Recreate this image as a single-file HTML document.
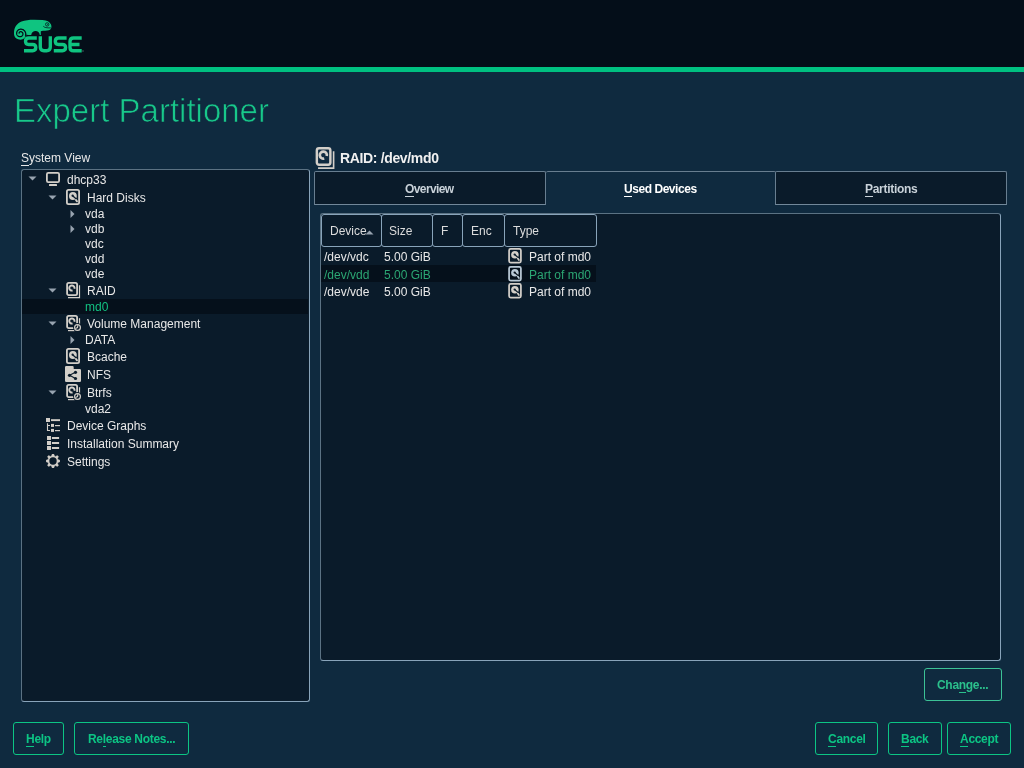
<!DOCTYPE html><html><head><meta charset="utf-8"><style>
html,body{margin:0;padding:0;width:1024px;height:768px;overflow:hidden;background:#0f2a3f;font-family:"Liberation Sans",sans-serif;}
.a{position:absolute;display:block}
.t{position:absolute;white-space:nowrap;will-change:transform}
u{text-decoration:none;border-bottom:1px solid currentColor;}
.btn{position:absolute;box-sizing:border-box;border:1px solid #0cc584;border-radius:3px;}
</style></head><body>
<div class="a" style="left:0;top:0;width:1024px;height:67px;background:#040e19"></div>
<div class="a" style="left:0;top:67px;width:1024px;height:5px;background:#00c081"></div>
<svg class="a" style="left:0;top:0" width="100" height="60" viewBox="0 0 100 60">
<path d="M14 33.5 C14 27 17 23.5 21.5 21.6 C25 20.2 29 19.7 34 19.7 L42.5 20 C47 20.2 49.8 21.8 51 24.5 C51.8 26.5 51.6 28.6 50 29.7 C48.5 30.6 46 30.7 43 30.8 L40.8 31.2 L40.8 34.9 L39.8 34.9 C39.5 32.6 37.8 31 35.6 31 C33.4 31 31.6 32.6 31.2 34.9 L27.8 34.9 L26.6 34.6 C25.9 36.6 24.6 38.5 22.6 39.3 C20.5 40 17.8 39.6 16 38.2 C14.6 37 14 35.3 14 33.5 Z" fill="#0fc480"/>
<path d="M25.48 35.97 L25.62 35.45 L25.72 34.94 L25.76 34.42 L25.75 33.90 L25.70 33.39 L25.60 32.90 L25.45 32.42 L25.26 31.96 L25.03 31.54 L24.76 31.13 L24.46 30.77 L24.12 30.43 L23.76 30.13 L23.38 29.88 L22.98 29.66 L22.57 29.48 L22.15 29.35 L21.72 29.26 L21.29 29.21 L20.86 29.21 L20.44 29.24 L20.03 29.30 L19.63 29.39 L19.25 29.52 L18.88 29.68 L18.53 29.88 L18.20 30.10 L17.90 30.36 L17.63 30.64 L17.39 30.94 L17.18 31.26 L17.01 31.59 L16.87 31.94 L16.76 32.30 L16.69 32.66 L16.65 33.02 L16.65 33.38 L16.69 33.74 L16.75 34.08 L16.85 34.42 L16.98 34.74 L17.14 35.04 L17.33 35.33 L17.53 35.59 L17.76 35.83 L18.01 36.04 L18.28 36.23 L18.56 36.39 L18.85 36.52 L19.15 36.62 L19.45 36.69 L19.76 36.72 L20.06 36.73 L20.36 36.71 L20.65 36.67 L20.94 36.59 L21.21 36.49 L21.47 36.37 L21.71 36.22 L21.93 36.05 L22.13 35.86 L22.32 35.66 L22.47 35.45 L22.61 35.22 L22.72 34.98 L22.81 34.74 L22.87 34.49 L22.91 34.24 L22.92 34.00 L22.91 33.75 L22.88 33.52 L22.82 33.29 L22.74 33.07 L22.64 32.86 L22.53 32.66 L22.40 32.48 L22.25 32.32 L22.09 32.17 L21.92 32.05 L21.75 31.94 L21.56 31.85 L21.37 31.78 L21.18 31.73 L20.99 31.70 L20.80 31.69 L20.61 31.70 L20.43 31.72 L20.25 31.77 L20.09 31.83 L19.93 31.90 L19.78 31.99 L19.65 32.09 L19.53 32.20 L19.42 32.32 L19.33 32.44 L19.25 32.57 L19.19 32.71 L19.14 32.85 L19.11 32.99 L19.10 33.13" fill="none" stroke="#040e19" stroke-width="1.25" stroke-linecap="round"/>
<circle cx="47.2" cy="24.4" r="1.7" fill="none" stroke="#040e19" stroke-width="0.75"/>
<circle cx="47.6" cy="24.2" r="0.5" fill="#040e19"/>
<path d="M43.3 26.3 C44.5 27.5 46.5 28 50.9 27.9" fill="none" stroke="#040e19" stroke-width="0.75"/>
<g fill="none" stroke="#0fc480" stroke-width="3.35">
<path d="M36.8 37.95 H28.7 Q25.5 37.95 25.5 41.2 V41.3 Q25.5 44.5 28.7 44.5 H32.6 Q35.8 44.5 35.8 47.6 V47.6 Q35.8 50.75 32.6 50.75 H24.0"/>
<path d="M40.3 36.3 V47 Q40.3 50.75 44 50.75 H46.6 Q50.3 50.75 50.3 47 V36.3"/>
<path d="M66.6 37.95 H58.5 Q55.3 37.95 55.3 41.2 V41.3 Q55.3 44.5 58.5 44.5 H62.400000000000006 Q65.6 44.5 65.6 47.6 V47.6 Q65.6 50.75 62.400000000000006 50.75 H53.8"/>
<path d="M81.7 37.95 H73.5 Q70 37.95 70 41.5 V47.2 Q70 50.75 73.5 50.75 H81.7 M70.5 44.5 H79.5"/>
</g>
<circle cx="83" cy="51" r="0.7" fill="#5a7a78"/>
</svg>
<div class="t" style="left:13.5px;top:90px;font-size:33px;line-height:41px;font-weight:normal;color:#18c88a;-webkit-text-stroke:0.7px #0f2a3f">Expert Partitioner</div>
<div class="t" style="left:21px;top:151px;font-size:12px;line-height:15px;font-weight:normal;color:#e8e8e8;"><u>S</u>ystem View</div>
<div class="a" style="left:21px;top:169px;width:287px;height:531px;background:#0a1b2a;border:1px solid #89a4ba;border-left-color:#5b7283;border-top-color:#5b7283;border-radius:3px"></div>
<div class="a" style="left:22px;top:299px;width:286px;height:15px;background:#05101b"></div>
<svg class="a" style="left:28px;top:176px" width="9" height="5" viewBox="0 0 9 5"><path d="M0.5 0.5 H8.5 L4.5 4.5 Z" fill="#98a4b0"/></svg>
<svg class="a" style="left:46px;top:172px" width="14" height="14" viewBox="0 0 14 14"><rect x="0.9" y="0.9" width="12.2" height="9.2" rx="1.4" fill="none" stroke="#d3cfc9" stroke-width="1.8"/><rect x="3" y="12" width="8" height="2" rx="0.6" fill="#d3cfc9"/></svg>
<div class="t" style="left:67px;top:173px;font-size:12px;line-height:15px;font-weight:normal;color:#e8e8e8;">dhcp33</div>
<svg class="a" style="left:48px;top:195px" width="9" height="5" viewBox="0 0 9 5"><path d="M0.5 0.5 H8.5 L4.5 4.5 Z" fill="#98a4b0"/></svg>
<svg class="a" style="left:66px;top:189px" width="14" height="16" viewBox="0 0 14 16"><rect x="0.9" y="0.9" width="12.2" height="14.2" rx="1.6" fill="none" stroke="#d3cfc9" stroke-width="1.8"/><circle cx="6.9" cy="7.0" r="3.9" fill="#d3cfc9"/><path d="M6.6 6.7 L10.6 10.2" stroke="#0a1b2a" stroke-width="1.3"/><circle cx="6.6" cy="6.7" r="1.15" fill="#0a1b2a"/><path d="M9.9 10.9 L11.0 12.4" stroke="#d3cfc9" stroke-width="1.8" stroke-linecap="round"/></svg>
<div class="t" style="left:87px;top:191px;font-size:12px;line-height:15px;font-weight:normal;color:#e8e8e8;">Hard Disks</div>
<svg class="a" style="left:70px;top:210px" width="5" height="8" viewBox="0 0 5 8"><path d="M0.5 0 V8 L4.5 4 Z" fill="#98a4b0"/></svg>
<div class="t" style="left:85px;top:207px;font-size:12px;line-height:15px;font-weight:normal;color:#e8e8e8;">vda</div>
<svg class="a" style="left:70px;top:225px" width="5" height="8" viewBox="0 0 5 8"><path d="M0.5 0 V8 L4.5 4 Z" fill="#98a4b0"/></svg>
<div class="t" style="left:85px;top:222px;font-size:12px;line-height:15px;font-weight:normal;color:#e8e8e8;">vdb</div>
<div class="t" style="left:85px;top:237px;font-size:12px;line-height:15px;font-weight:normal;color:#e8e8e8;">vdc</div>
<div class="t" style="left:85px;top:252px;font-size:12px;line-height:15px;font-weight:normal;color:#e8e8e8;">vdd</div>
<div class="t" style="left:85px;top:267px;font-size:12px;line-height:15px;font-weight:normal;color:#e8e8e8;">vde</div>
<svg class="a" style="left:48px;top:288px" width="9" height="5" viewBox="0 0 9 5"><path d="M0.5 0.5 H8.5 L4.5 4.5 Z" fill="#98a4b0"/></svg>
<svg class="a" style="left:66px;top:282px" width="15" height="17" viewBox="0 0 15 17"><path d="M13.5 3.2 V15.6 H2" fill="none" stroke="#d3cfc9" stroke-width="1.2"/><rect x="1.1" y="0.9" width="10" height="12.2" rx="1.6" fill="none" stroke="#d3cfc9" stroke-width="1.8"/><path d="M8.41 6.67 A2.6 2.6 0 1 0 6.57 8.51" fill="none" stroke="#d3cfc9" stroke-width="2.0"/></svg>
<div class="t" style="left:87px;top:284px;font-size:12px;line-height:15px;font-weight:normal;color:#e8e8e8;">RAID</div>
<div class="t" style="left:85px;top:300px;font-size:12px;line-height:15px;font-weight:normal;color:#12c081;">md0</div>
<svg class="a" style="left:48px;top:321px" width="9" height="5" viewBox="0 0 9 5"><path d="M0.5 0.5 H8.5 L4.5 4.5 Z" fill="#98a4b0"/></svg>
<svg class="a" style="left:66px;top:315px" width="16" height="17" viewBox="0 0 16 17"><path d="M13.5 3.2 V9.6" fill="none" stroke="#d3cfc9" stroke-width="1.2"/><path d="M2 15.6 H8.6" fill="none" stroke="#d3cfc9" stroke-width="1.2"/><rect x="1.1" y="0.9" width="10" height="12.2" rx="1.6" fill="none" stroke="#d3cfc9" stroke-width="1.8"/><path d="M8.41 6.67 A2.6 2.6 0 1 0 6.57 8.51" fill="none" stroke="#d3cfc9" stroke-width="2.0"/><circle cx="11.5" cy="12.5" r="4.4" fill="#0a1b2a"/><circle cx="11.5" cy="12.5" r="2.9" fill="none" stroke="#d3cfc9" stroke-width="1.2"/><path d="M11.9 10.1 L11.5 12.5 L9.4 13.4" fill="none" stroke="#d3cfc9" stroke-width="1.1"/></svg>
<div class="t" style="left:87px;top:317px;font-size:12px;line-height:15px;font-weight:normal;color:#e8e8e8;">Volume Management</div>
<svg class="a" style="left:70px;top:336px" width="5" height="8" viewBox="0 0 5 8"><path d="M0.5 0 V8 L4.5 4 Z" fill="#98a4b0"/></svg>
<div class="t" style="left:85px;top:333px;font-size:12px;line-height:15px;font-weight:normal;color:#e8e8e8;">DATA</div>
<svg class="a" style="left:66px;top:348px" width="14" height="16" viewBox="0 0 14 16"><rect x="0.9" y="0.9" width="12.2" height="14.2" rx="1.6" fill="none" stroke="#d3cfc9" stroke-width="1.8"/><circle cx="6.9" cy="7.0" r="3.9" fill="#d3cfc9"/><path d="M6.6 6.7 L10.6 10.2" stroke="#0a1b2a" stroke-width="1.3"/><circle cx="6.6" cy="6.7" r="1.15" fill="#0a1b2a"/><path d="M9.9 10.9 L11.0 12.4" stroke="#d3cfc9" stroke-width="1.8" stroke-linecap="round"/></svg>
<div class="t" style="left:87px;top:350px;font-size:12px;line-height:15px;font-weight:normal;color:#e8e8e8;">Bcache</div>
<svg class="a" style="left:65px;top:366px" width="16" height="16" viewBox="0 0 16 16"><path d="M1.2 0 H7.5 A1.2 1.2 0 0 1 8.7 1.2 V3 H14.8 A1.2 1.2 0 0 1 16 4.2 V14.8 A1.2 1.2 0 0 1 14.8 16 H1.2 A1.2 1.2 0 0 1 0 14.8 V1.2 A1.2 1.2 0 0 1 1.2 0 Z" fill="#d3cfc9"/><path d="M10.5 6.3 L4.5 9.3 L10.5 12.5" fill="none" stroke="#0a1b2a" stroke-width="1.1"/><circle cx="10.5" cy="6.3" r="1.6" fill="#0a1b2a"/><circle cx="10.5" cy="12.5" r="1.6" fill="#0a1b2a"/><circle cx="4.5" cy="9.3" r="1.6" fill="#0a1b2a"/></svg>
<div class="t" style="left:87px;top:368px;font-size:12px;line-height:15px;font-weight:normal;color:#e8e8e8;">NFS</div>
<svg class="a" style="left:48px;top:390px" width="9" height="5" viewBox="0 0 9 5"><path d="M0.5 0.5 H8.5 L4.5 4.5 Z" fill="#98a4b0"/></svg>
<svg class="a" style="left:66px;top:384px" width="16" height="17" viewBox="0 0 16 17"><path d="M13.5 3.2 V9.6" fill="none" stroke="#d3cfc9" stroke-width="1.2"/><path d="M2 15.6 H8.6" fill="none" stroke="#d3cfc9" stroke-width="1.2"/><rect x="1.1" y="0.9" width="10" height="12.2" rx="1.6" fill="none" stroke="#d3cfc9" stroke-width="1.8"/><path d="M8.41 6.67 A2.6 2.6 0 1 0 6.57 8.51" fill="none" stroke="#d3cfc9" stroke-width="2.0"/><circle cx="11.5" cy="12.5" r="4.4" fill="#0a1b2a"/><circle cx="11.5" cy="12.5" r="2.9" fill="none" stroke="#d3cfc9" stroke-width="1.2"/><path d="M11.9 10.1 L11.5 12.5 L9.4 13.4" fill="none" stroke="#d3cfc9" stroke-width="1.1"/></svg>
<div class="t" style="left:87px;top:386px;font-size:12px;line-height:15px;font-weight:normal;color:#e8e8e8;">Btrfs</div>
<div class="t" style="left:85px;top:402px;font-size:12px;line-height:15px;font-weight:normal;color:#e8e8e8;">vda2</div>
<svg class="a" style="left:46px;top:418px" width="15" height="14" viewBox="0 0 15 14"><rect x="0" y="0" width="4" height="4" fill="#d3cfc9"/><rect x="5" y="1.2" width="9" height="1.9" fill="#d3cfc9"/><path d="M1.5 5.2 V12.5 H4 M1.5 7.5 H4" fill="none" stroke="#d3cfc9" stroke-width="1.1"/><rect x="5" y="5.9" width="3" height="3" fill="#d3cfc9"/><rect x="9" y="7" width="5" height="1.2" fill="#d3cfc9"/><rect x="5" y="10.9" width="3" height="3" fill="#d3cfc9"/><rect x="9" y="12" width="5" height="1.2" fill="#d3cfc9"/></svg>
<div class="t" style="left:67px;top:419px;font-size:12px;line-height:15px;font-weight:normal;color:#e8e8e8;">Device Graphs</div>
<svg class="a" style="left:47px;top:436px" width="13" height="14" viewBox="0 0 13 14"><rect x="0" y="0" width="4" height="4" fill="#d3cfc9"/><rect x="4.9" y="1" width="7.2" height="2" fill="#d3cfc9"/><rect x="0" y="5" width="4" height="4" fill="#d3cfc9"/><rect x="4.9" y="6" width="7.2" height="2" fill="#d3cfc9"/><rect x="0" y="10" width="4" height="4" fill="#d3cfc9"/><rect x="4.9" y="11" width="7.2" height="2" fill="#d3cfc9"/></svg>
<div class="t" style="left:67px;top:437px;font-size:12px;line-height:15px;font-weight:normal;color:#e8e8e8;">Installation Summary</div>
<svg class="a" style="left:46px;top:454px" width="14" height="14" viewBox="0 0 14 14"><polygon points="6.23,0.04 7.77,0.04 8.54,2.03 9.43,2.40 11.38,1.54 12.46,2.62 11.60,4.57 11.97,5.46 13.96,6.23 13.96,7.77 11.97,8.54 11.60,9.43 12.46,11.38 11.38,12.46 9.43,11.60 8.54,11.97 7.77,13.96 6.23,13.96 5.46,11.97 4.57,11.60 2.62,12.46 1.54,11.38 2.40,9.43 2.03,8.54 0.04,7.77 0.04,6.23 2.03,5.46 2.40,4.57 1.54,2.62 2.62,1.54 4.57,2.40 5.46,2.03" fill="#d3cfc9" stroke="#d3cfc9" stroke-width="0.4" stroke-linejoin="round"/><circle cx="7" cy="7" r="3.7" fill="#0a1b2a"/></svg>
<div class="t" style="left:67px;top:455px;font-size:12px;line-height:15px;font-weight:normal;color:#e8e8e8;">Settings</div>
<svg class="a" style="left:315px;top:147px" width="21" height="23" viewBox="0 0 15 17"><path d="M13.5 3.2 V15.6 H2" fill="none" stroke="#d3cfc9" stroke-width="1.2"/><rect x="1.1" y="0.9" width="10" height="12.2" rx="1.6" fill="none" stroke="#d3cfc9" stroke-width="1.8"/><path d="M8.41 6.67 A2.6 2.6 0 1 0 6.57 8.51" fill="none" stroke="#d3cfc9" stroke-width="2.0"/></svg>
<div class="t" style="left:339.5px;top:149px;font-size:14px;line-height:18px;font-weight:bold;color:#f0f0f0;letter-spacing:-0.35px">RAID: /dev/md0</div>
<div class="a" style="left:546px;top:171px;width:230px;height:34px;background:#0f2a3f;border-top:1px solid #687e90;border-radius:2px 2px 0 0"></div>
<div class="a" style="left:314px;top:171px;width:230px;height:32px;background:#0a1b2a;border:1px solid #687e90;border-bottom-color:#72889a;border-radius:2px 2px 0 0"></div>
<div class="a" style="left:775px;top:171px;width:230px;height:32px;background:#0a1b2a;border:1px solid #687e90;border-bottom-color:#72889a;border-radius:2px 2px 0 0"></div>
<div class="t" style="left:405px;top:182px;font-size:12px;line-height:15px;font-weight:bold;color:#c9d2d9;letter-spacing:-0.6px"><u>O</u>verview</div>
<div class="t" style="left:624px;top:182px;font-size:12px;line-height:15px;font-weight:bold;color:#ffffff;letter-spacing:-0.45px"><u>U</u>sed Devices</div>
<div class="t" style="left:865px;top:182px;font-size:12px;line-height:15px;font-weight:bold;color:#c9d2d9;letter-spacing:-0.3px"><u>P</u>artitions</div>
<div class="a" style="left:320px;top:213px;width:679px;height:446px;background:#0a1b2a;border:1px solid #89a4ba;border-left-color:#5b7283;border-top-color:#5b7283;border-radius:3px"></div>
<div class="a" style="left:321px;top:214px;width:59px;height:31px;border:1px solid #89a4ba;border-radius:3px"></div>
<div class="t" style="left:330px;top:224px;font-size:12px;line-height:15px;font-weight:normal;color:#dcdcdc;">Device</div>
<svg class="a" style="left:365px;top:230px" width="9" height="5" viewBox="0 0 9 5"><path d="M0.5 4.5 H8.5 L4.5 0.5 Z" fill="#98a4b0"/></svg>
<div class="a" style="left:381px;top:214px;width:50px;height:31px;border:1px solid #89a4ba;border-radius:3px"></div>
<div class="t" style="left:389px;top:224px;font-size:12px;line-height:15px;font-weight:normal;color:#dcdcdc;">Size</div>
<div class="a" style="left:432px;top:214px;width:29px;height:31px;border:1px solid #89a4ba;border-radius:3px"></div>
<div class="t" style="left:441px;top:224px;font-size:12px;line-height:15px;font-weight:normal;color:#dcdcdc;">F</div>
<div class="a" style="left:462px;top:214px;width:41px;height:31px;border:1px solid #89a4ba;border-radius:3px"></div>
<div class="t" style="left:471px;top:224px;font-size:12px;line-height:15px;font-weight:normal;color:#dcdcdc;">Enc</div>
<div class="a" style="left:504px;top:214px;width:91px;height:31px;border:1px solid #89a4ba;border-radius:3px"></div>
<div class="t" style="left:513px;top:224px;font-size:12px;line-height:15px;font-weight:normal;color:#dcdcdc;">Type</div>
<div class="a" style="left:321px;top:265px;width:275px;height:17px;background:#05101b"></div>
<div class="t" style="left:324px;top:250px;font-size:12px;line-height:15px;font-weight:normal;color:#e8e8e8;">/dev/vdc</div>
<div class="t" style="left:384px;top:250px;font-size:12px;line-height:15px;font-weight:normal;color:#e8e8e8;">5.00 GiB</div>
<svg class="a" style="left:508px;top:248px" width="14" height="15.5" viewBox="0 0 14 16"><rect x="0.9" y="0.9" width="12.2" height="14.2" rx="1.6" fill="none" stroke="#d3cfc9" stroke-width="1.8"/><circle cx="6.9" cy="7.0" r="3.9" fill="#d3cfc9"/><path d="M6.6 6.7 L10.6 10.2" stroke="#0a1b2a" stroke-width="1.3"/><circle cx="6.6" cy="6.7" r="1.15" fill="#0a1b2a"/><path d="M9.9 10.9 L11.0 12.4" stroke="#d3cfc9" stroke-width="1.8" stroke-linecap="round"/></svg>
<div class="t" style="left:529px;top:250px;font-size:12px;line-height:15px;font-weight:normal;color:#e8e8e8;">Part of md0</div>
<div class="t" style="left:324px;top:268px;font-size:12px;line-height:15px;font-weight:normal;color:#2ba673;">/dev/vdd</div>
<div class="t" style="left:384px;top:268px;font-size:12px;line-height:15px;font-weight:normal;color:#2ba673;">5.00 GiB</div>
<svg class="a" style="left:508px;top:266px" width="14" height="15.5" viewBox="0 0 14 16"><rect x="0.9" y="0.9" width="12.2" height="14.2" rx="1.6" fill="none" stroke="#b9c9d6" stroke-width="1.8"/><circle cx="6.9" cy="7.0" r="3.9" fill="#b9c9d6"/><path d="M6.6 6.7 L10.6 10.2" stroke="#05101b" stroke-width="1.3"/><circle cx="6.6" cy="6.7" r="1.15" fill="#05101b"/><path d="M9.9 10.9 L11.0 12.4" stroke="#b9c9d6" stroke-width="1.8" stroke-linecap="round"/></svg>
<div class="t" style="left:529px;top:268px;font-size:12px;line-height:15px;font-weight:normal;color:#2ba673;">Part of md0</div>
<div class="t" style="left:324px;top:285px;font-size:12px;line-height:15px;font-weight:normal;color:#e8e8e8;">/dev/vde</div>
<div class="t" style="left:384px;top:285px;font-size:12px;line-height:15px;font-weight:normal;color:#e8e8e8;">5.00 GiB</div>
<svg class="a" style="left:508px;top:283px" width="14" height="15.5" viewBox="0 0 14 16"><rect x="0.9" y="0.9" width="12.2" height="14.2" rx="1.6" fill="none" stroke="#d3cfc9" stroke-width="1.8"/><circle cx="6.9" cy="7.0" r="3.9" fill="#d3cfc9"/><path d="M6.6 6.7 L10.6 10.2" stroke="#0a1b2a" stroke-width="1.3"/><circle cx="6.6" cy="6.7" r="1.15" fill="#0a1b2a"/><path d="M9.9 10.9 L11.0 12.4" stroke="#d3cfc9" stroke-width="1.8" stroke-linecap="round"/></svg>
<div class="t" style="left:529px;top:285px;font-size:12px;line-height:15px;font-weight:normal;color:#e8e8e8;">Part of md0</div>
<div class="btn" style="left:924px;top:668px;width:78px;height:33px;border-color:#3cc296"></div>
<div class="t" style="left:937px;top:678px;font-size:12px;line-height:15px;font-weight:bold;color:#2bc08c;letter-spacing:-0.3px">Cha<u>n</u>ge...</div>
<div class="btn" style="left:13px;top:722px;width:51px;height:33px;border-color:#0cc584"></div>
<div class="t" style="left:26px;top:732px;font-size:12px;line-height:15px;font-weight:bold;color:#0cc584;letter-spacing:-0.3px"><u>H</u>elp</div>
<div class="btn" style="left:74px;top:722px;width:115px;height:33px;border-color:#0cc584"></div>
<div class="t" style="left:87.5px;top:732px;font-size:12px;line-height:15px;font-weight:bold;color:#0cc584;letter-spacing:-0.3px">Re<u>l</u>ease Notes...</div>
<div class="btn" style="left:815px;top:722px;width:63px;height:33px;border-color:#0cc584"></div>
<div class="t" style="left:828px;top:732px;font-size:12px;line-height:15px;font-weight:bold;color:#0cc584;letter-spacing:-0.3px"><u>C</u>ancel</div>
<div class="btn" style="left:888px;top:722px;width:54px;height:33px;border-color:#0cc584"></div>
<div class="t" style="left:901px;top:732px;font-size:12px;line-height:15px;font-weight:bold;color:#0cc584;letter-spacing:-0.3px"><u>B</u>ack</div>
<div class="btn" style="left:947px;top:722px;width:64px;height:33px;border-color:#0cc584"></div>
<div class="t" style="left:960px;top:732px;font-size:12px;line-height:15px;font-weight:bold;color:#0cc584;letter-spacing:-0.3px"><u>A</u>ccept</div>
</body></html>
